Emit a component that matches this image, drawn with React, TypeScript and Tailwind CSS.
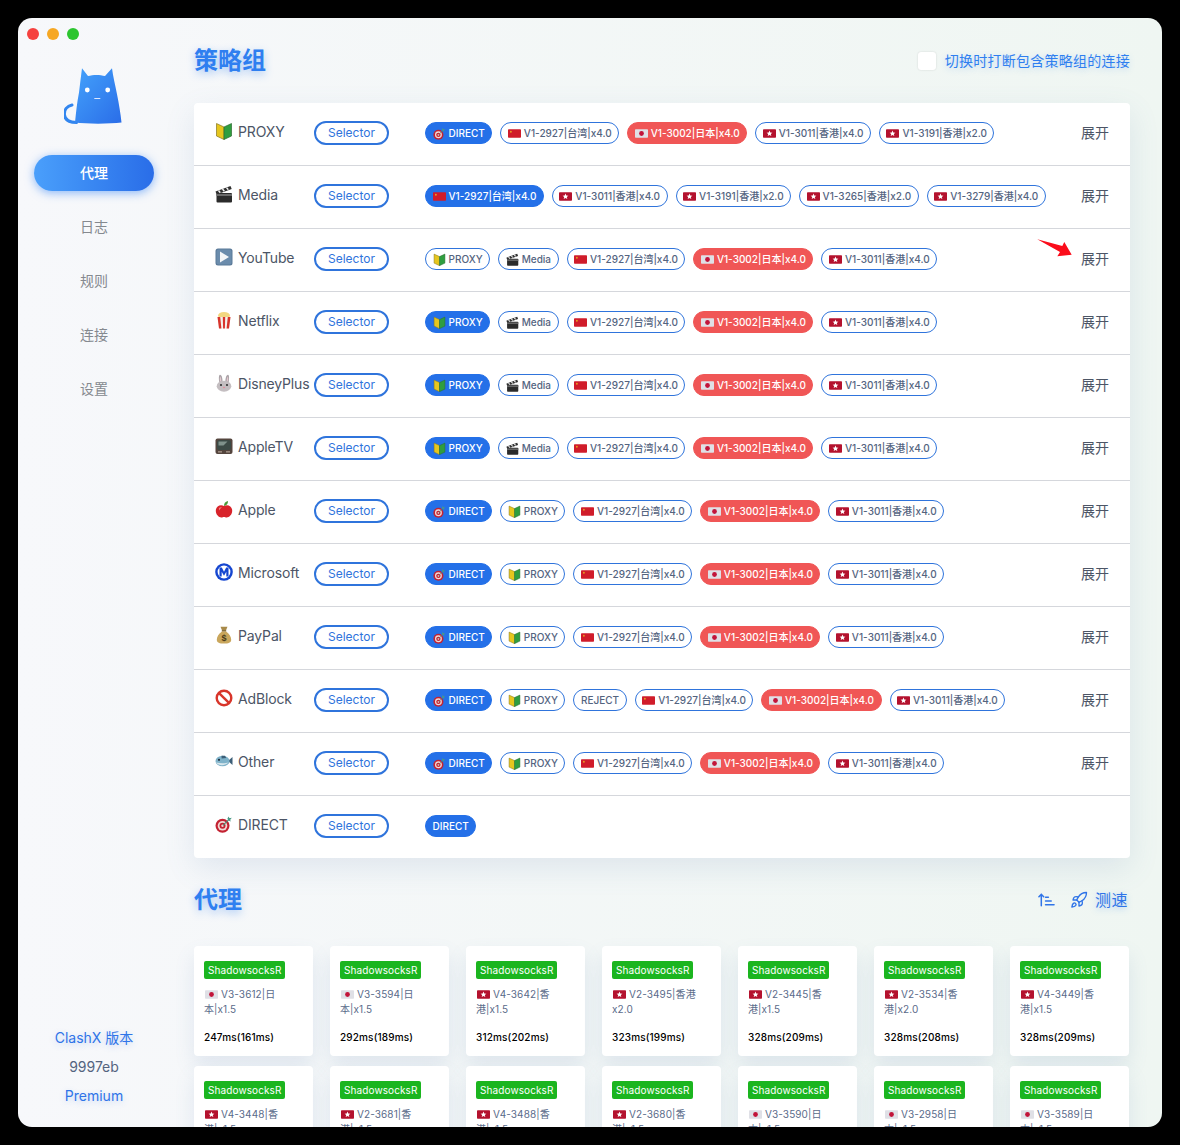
import type { ReactNode } from "react";
import { Rocket } from "lucide-react";

const ui = "font-['Inter','Noto_Sans_CJK_SC',sans-serif]";

type IconName =
    | "shield" | "clapper" | "play" | "popcorn" | "rabbit" | "tv"
    | "apple" | "metro" | "bag" | "noentry" | "fish" | "target"
    | "cn" | "jp" | "hk";

function Icon({ name, className }: { name: IconName; className?: string }) {
    const body: Record<IconName, ReactNode> = {
        shield: (
            <>
                <path d="M1.500 1.500 9 5v12.500L1.500 14Z" fill="#e6c61e" stroke="#857522" strokeWidth=".7" />
                <path d="M16.500 1.500 9 5v12.500l7.500-3.500Z" fill="#2f9e3f" stroke="#2c6b30" strokeWidth=".7" />
            </>
        ),
        clapper: (
            <>
                <rect x="1.500" y="8" width="15.500" height="9.500" rx="1" fill="#2b2b2b" />
                <path d="M.5 6.500 15.500 1l1.200 3L1.700 9.500Z" fill="#2f2f2f" />
                <path d="m3.500 5.500 1.800 2.200M7.500 4 9.300 6.200M11.500 2.600l1.800 2.200" stroke="#eee" strokeWidth="1.500" />
                <rect x="1.500" y="9" width="15.500" height="2" fill="#6a6a6a" />
            </>
        ),
        play: (
            <>
                <rect x="0.500" y="0.500" width="17" height="17" rx="2.500" fill="#5b7a99" />
                <rect x="1.500" y="1.500" width="15" height="15" rx="2" fill="#6b8cac" />
                <path d="M5 3.500v11l9-5.500Z" fill="#f4f6f8" />
            </>
        ),
        popcorn: (
            <>
                <ellipse cx="9" cy="4.500" rx="6" ry="3.500" fill="#f2d781" />
                <path d="M2.500 6h13L14 17.500H4Z" fill="#f4f1ec" />
                <path d="M2.500 6h2.700l1.200 11.500H4ZM7.800 6h2.400l-.300 11.500H8.100ZM12.800 6h2.700L14 17.500h-2.400Z" fill="#d8342c" />
            </>
        ),
        rabbit: (
            <>
                <path d="M5 .8c1.800 0 2.600 3.700 2.600 7.200H4.300C3.700 5 3.700.8 5 .8ZM13 .8c1.300 0 1.300 4.200.700 7.200H10.400c0-3.500.800-7.200 2.600-7.200Z" fill="#aaa3a7" />
                <path d="M5.300 2.500c.7 1 1 3 1 5H5c-.300-2-.300-4 .300-5ZM12.700 2.500c.600 1 .600 3 .300 5h-1.300c0-2 .300-4 1-5Z" fill="#e4c8cf" />
                <ellipse cx="9" cy="12.200" rx="7.300" ry="5.500" fill="#c4bec1" />
                <circle cx="6" cy="11" r="1.100" fill="#333" />
                <circle cx="12" cy="11" r="1.100" fill="#333" />
                <ellipse cx="9" cy="13.500" rx="1.200" ry=".800" fill="#e48f9f" />
            </>
        ),
        tv: (
            <>
                <rect x="0.500" y="1.500" width="17" height="15.500" rx="2" fill="#54453e" />
                <rect x="2" y="3" width="14" height="10" rx="2.500" fill="#3c4a46" />
                <path d="M3.500 4.500h9l-4 4H3.500Z" fill="#7f918b" />
                <rect x="3" y="14.200" width="4" height="1.300" fill="#a8988c" />
                <rect x="11" y="14.200" width="4" height="1.300" fill="#a8988c" />
            </>
        ),
        apple: (
            <>
                <path d="M9 6C6 4 .8 5.500.8 10.800.8 14.800 4 17.500 6.300 17.500c1.200 0 1.700-.500 2.700-.500s1.500.500 2.700.500c2.300 0 5.500-2.700 5.500-6.700C17.200 5.500 12 4 9 6Z" fill="#d8232a" />
                <path d="M4 8c1-1 2.500-1 3-.500-1 .300-2 1.500-2.500 3-.500-.800-.700-1.800-.500-2.500Z" fill="#f08080" />
                <path d="M9 6c0-2.500 1-4.300 4-5 0 2.500-1 4.300-4 5Z" fill="#4a9a36" />
            </>
        ),
        metro: (
            <>
                <circle cx="9" cy="9" r="8.800" fill="#1546d0" />
                <circle cx="9" cy="9" r="6.400" fill="#fff" />
                <path d="M4.500 13.500V4.500h2.300L9 8.800l2.200-4.300h2.300v9h-2.200V8.800L9 12.800 6.700 8.800v4.700Z" fill="#1546d0" />
            </>
        ),
        bag: (
            <>
                <path d="M5.500 .8h7l-1.700 4H7.200Z" fill="#a88a4a" />
                <rect x="6.800" y="4.300" width="4.400" height="1.300" fill="#6f5a2c" />
                <path d="M7 5.500h4c3.200 2 5.200 5.500 5.200 8.200 0 3.200-3 3.800-7.200 3.800s-7.200-.600-7.200-3.800C1.800 11 3.800 7.500 7 5.500Z" fill="#c9a65c" />
                <text x="9" y="15" textAnchor="middle" fontSize="9" fontWeight="700" fill="#4a3a18" fontFamily="Liberation Sans">$</text>
            </>
        ),
        noentry: (
            <>
                <circle cx="9" cy="9" r="7.300" fill="#fff" stroke="#d8352a" strokeWidth="2.400" />
                <path d="m3.800 3.800 10.400 10.400" stroke="#d8352a" strokeWidth="2.400" />
            </>
        ),
        fish: (
            <>
                <path d="M13 9l4.500-4v8Z" fill="#3c5f78" />
                <ellipse cx="7.500" cy="9" rx="7" ry="5.300" fill="#7fb2c9" />
                <path d="M1 10.500c3 3.300 8 3.800 12.500 0-3 1-8.500 1-12.500 0Z" fill="#d7e6ec" />
                <circle cx="4" cy="7.800" r="1.100" fill="#1f2d3a" />
                <path d="M6.500 3.800h3.500l1.200 2.200-4.500.500Z" fill="#3c5f78" />
            </>
        ),
        target: (
            <>
                <circle cx="7.500" cy="10.800" r="7" fill="#c32232" />
                <circle cx="7.500" cy="10.800" r="4.800" fill="#f0d8d4" />
                <circle cx="7.500" cy="10.800" r="3" fill="#c32232" />
                <circle cx="7.500" cy="10.800" r="1.200" fill="#f0d8d4" />
                <path d="m8 10.300 7-7" stroke="#4a8a78" strokeWidth="1.100" />
                <path d="m13.500 1.500 1 1.800 2.300-.500-1.700 2.200 1 1.500-2.700-1-1-1.800Z" fill="#4a9a86" />
            </>
        ),
        cn: (
            <>
                <rect x="0" y="3" width="18" height="12" rx="1" fill="#d01c2a" />
                <circle cx="4" cy="6.500" r="1.300" fill="#e8a020" />
            </>
        ),
        jp: (
            <>
                <rect x="0" y="3" width="18" height="12" rx="1" fill="#dfe0e6" />
                <circle cx="9" cy="9" r="3.300" fill="#c2143a" />
            </>
        ),
        hk: (
            <>
                <rect x="0" y="3" width="18" height="12" rx="1" fill="#b4122e" />
                <path d="m9 5 1.100 2.700 2.900.2-2.200 1.900.7 2.800L9 11.100l-2.500 1.500.7-2.800L5 7.900l2.900-.2Z" fill="#fff" />
            </>
        ),
    };
    return (
        <svg viewBox="0 0 18 18" className={className}>
            {body[name]}
        </svg>
    );
}

const direct = { icon: "target" as IconName, label: "DIRECT" };
const proxy = { icon: "shield" as IconName, label: "PROXY" };
const media = { icon: "clapper" as IconName, label: "Media" };
const tw2927 = { icon: "cn" as IconName, label: "V1-2927|台湾|x4.0" };
const jp3002 = { icon: "jp" as IconName, label: "V1-3002|日本|x4.0", red: true };
const hk3011 = { icon: "hk" as IconName, label: "V1-3011|香港|x4.0" };
const hk3191 = { icon: "hk" as IconName, label: "V1-3191|香港|x2.0" };
const hk3265 = { icon: "hk" as IconName, label: "V1-3265|香港|x2.0" };
const hk3279 = { icon: "hk" as IconName, label: "V1-3279|香港|x4.0" };
const reject = { label: "REJECT" };

type Tag = { icon?: IconName; label: string; red?: boolean };
type Group = { name: string; icon: IconName; tags: Tag[]; selected: string; hideExpand?: boolean };

const groups: Group[] = [
    { name: "PROXY", icon: "shield", tags: [direct, tw2927, jp3002, hk3011, hk3191], selected: "DIRECT" },
    { name: "Media", icon: "clapper", tags: [tw2927, hk3011, hk3191, hk3265, hk3279], selected: "V1-2927|台湾|x4.0" },
    { name: "YouTube", icon: "play", tags: [proxy, media, tw2927, jp3002, hk3011], selected: "" },
    { name: "Netflix", icon: "popcorn", tags: [proxy, media, tw2927, jp3002, hk3011], selected: "PROXY" },
    { name: "DisneyPlus", icon: "rabbit", tags: [proxy, media, tw2927, jp3002, hk3011], selected: "PROXY" },
    { name: "AppleTV", icon: "tv", tags: [proxy, media, tw2927, jp3002, hk3011], selected: "PROXY" },
    { name: "Apple", icon: "apple", tags: [direct, proxy, tw2927, jp3002, hk3011], selected: "DIRECT" },
    { name: "Microsoft", icon: "metro", tags: [direct, proxy, tw2927, jp3002, hk3011], selected: "DIRECT" },
    { name: "PayPal", icon: "bag", tags: [direct, proxy, tw2927, jp3002, hk3011], selected: "DIRECT" },
    { name: "AdBlock", icon: "noentry", tags: [direct, proxy, reject, tw2927, jp3002, hk3011], selected: "DIRECT" },
    { name: "Other", icon: "fish", tags: [direct, proxy, tw2927, jp3002, hk3011], selected: "DIRECT" },
    { name: "DIRECT", icon: "target", tags: [{ label: "DIRECT" }], selected: "DIRECT", hideExpand: true },
];

const proxies: { flag: IconName; name: string; delay: string }[] = [
    { flag: "jp", name: "V3-3612|日本|x1.5", delay: "247ms(161ms)" },
    { flag: "jp", name: "V3-3594|日本|x1.5", delay: "292ms(189ms)" },
    { flag: "hk", name: "V4-3642|香港|x1.5", delay: "312ms(202ms)" },
    { flag: "hk", name: "V2-3495|香港x2.0", delay: "323ms(199ms)" },
    { flag: "hk", name: "V2-3445|香港|x1.5", delay: "328ms(209ms)" },
    { flag: "hk", name: "V2-3534|香港|x2.0", delay: "328ms(208ms)" },
    { flag: "hk", name: "V4-3449|香港|x1.5", delay: "328ms(209ms)" },
    { flag: "hk", name: "V4-3448|香港|x1.5", delay: "" },
    { flag: "hk", name: "V2-3681|香港|x1.5", delay: "" },
    { flag: "hk", name: "V4-3488|香港|x1.5", delay: "" },
    { flag: "hk", name: "V2-3680|香港|x1.5", delay: "" },
    { flag: "jp", name: "V3-3590|日本|x1.5", delay: "" },
    { flag: "jp", name: "V3-2958|日本|x1.5", delay: "" },
    { flag: "jp", name: "V3-3589|日本|x1.5", delay: "" },
];

function Chip({ tag, selected }: { tag: Tag; selected: boolean }) {
    const tone = tag.red
        ? "bg-[#f05656] border-[#f05656] text-white"
        : selected
          ? "bg-[#2470e8] border-[#2470e8] text-white"
          : "bg-white border-[#2f74dc] text-[#54647f]";
    return (
        <span className={`flex h-[22px] items-center gap-[3px] whitespace-nowrap rounded-full border px-[6.5px] text-[10px] font-medium ${tone}`}>
            {tag.icon && <Icon name={tag.icon} className="h-[13px] w-[13px] shrink-0" />}
            {tag.label}
        </span>
    );
}

function GroupRow({ group }: { group: Group }) {
    return (
        <div className="flex h-[63px] items-center border-b border-[#d5d7dc] pb-[2px] pl-[21px] pr-[21px] last:h-[62px] last:border-b-0">
            <Icon name={group.icon} className="mb-[4px] h-[18px] w-[18px] shrink-0" />
            <span className="mb-[4px] ml-[5px] w-[76px] shrink-0 whitespace-nowrap text-[14px] tracking-[-0.15px] text-[#4c5566]">{group.name}</span>
            <span className="flex h-[24px] w-[75px] shrink-0 items-center justify-center rounded-full border-2 border-[#2f74dc] text-[12px] text-[#2f74dc]">
                Selector
            </span>
            <div className="ml-[36px] flex min-w-0 flex-1 items-center gap-[8px]">
                {group.tags.map((tag) => (
                    <Chip key={tag.label} tag={tag} selected={tag.label === group.selected} />
                ))}
            </div>
            {!group.hideExpand && <span className="mb-[2px] text-[14px] text-[#4c5566]">展开</span>}
        </div>
    );
}

function ProxyCard({ flag, name, delay }: { flag: IconName; name: string; delay: string }) {
    return (
        <div className="h-[110px] rounded-[4px] bg-white px-[10px] pt-[15px] shadow-[0_10px_20px_rgba(90,130,180,0.14)]">
            <span className="block h-[18px] w-fit rounded-[2px] bg-[#1bb51f] px-[4px] text-[10px] leading-[18px] tracking-[0.1px] text-white">
                ShadowsocksR
            </span>
            <div className="mt-[8px] h-[30px] text-[10px] leading-[15px] tracking-[0.1px] text-[#5a6b8a]">
                <Icon name={flag} className="ml-[1px] mr-[3px] inline-block h-[13px] w-[13px] align-[-3px]" />
                {name}
            </div>
            <div className="mt-[13px] text-[10px] font-medium leading-[15px] tracking-[0.15px] text-black">{delay}</div>
        </div>
    );
}

function CatLogo() {
    return (
        <svg viewBox="0 0 58 56" className="mr-[2px] h-[56px] w-[58px]">
            <defs>
                <linearGradient id="cat" x1="0" y1="0" x2="1" y2="1">
                    <stop offset="0" stopColor="#44a2fb" />
                    <stop offset="1" stopColor="#2a6de8" />
                </linearGradient>
            </defs>
            <path d="M8 37C3 38 0 42 .5 47c.5 5 5 7.500 12 7.500" fill="none" stroke="#3286ef" strokeWidth="3" strokeLinecap="round" />
            <path d="M18 .3l6 7.700c5-1.500 12-1.500 17 0l7-7.700c1 8 3 16 5 26 2 10 3.500 19 4.500 28.200-12 1.500-35 1.500-46.500 0 1-10 2-20 4-30C16 16 17 8 18 .3Z" fill="url(#cat)" />
            <circle cx="23.300" cy="22" r="2.400" fill="#fff" />
            <circle cx="43.700" cy="22" r="2.400" fill="#fff" />
            <rect x="30.300" y="30" width="6" height="1" fill="#dbe8ff" />
        </svg>
    );
}

export default function App() {
    return (
        <div className={`h-[1145px] w-[1180px] bg-black p-[18px] ${ui}`}>
            <div className="relative flex h-[1109px] w-[1144px] overflow-hidden rounded-[14px] bg-gradient-to-r from-[#f7f8fb] to-[#eff6f2]">
                {/* traffic lights */}
                <div className="absolute left-[9px] top-[10px] flex gap-[8px]">
                    <span className="h-[12px] w-[12px] rounded-full bg-[#f5413f]" />
                    <span className="h-[12px] w-[12px] rounded-full bg-[#f6a723]" />
                    <span className="h-[12px] w-[12px] rounded-full bg-[#2cc52f]" />
                </div>

                <aside className="flex w-[152px] shrink-0 flex-col items-center pt-[50px]">
                    <CatLogo />
                    <nav className="mt-[31px] flex w-[120px] flex-col gap-[18px] text-center text-[14px] text-[#85898f]">
                        <span className="h-[36px] rounded-full bg-gradient-to-r from-[#4a9ffb] to-[#2a6de8] font-medium leading-[36px] text-white shadow-[0_2px_10px_rgba(50,130,245,0.55)]">
                            代理
                        </span>
                        <span className="h-[36px] leading-[36px]">日志</span>
                        <span className="h-[36px] leading-[36px]">规则</span>
                        <span className="h-[36px] leading-[36px]">连接</span>
                        <span className="h-[36px] leading-[36px]">设置</span>
                    </nav>
                    <div className="mb-[21px] mt-auto flex flex-col items-center gap-[9px] text-[14px] leading-[20px]">
                        <span className="text-[#2f74e8] [text-shadow:0_2px_6px_rgba(47,116,232,0.25)]">ClashX 版本</span>
                        <span className="text-[#54647f]">9997eb</span>
                        <span className="text-[#2f74e8] [text-shadow:0_2px_6px_rgba(47,116,232,0.25)]">Premium</span>
                    </div>
                </aside>

                <main className="relative flex min-w-0 flex-1 flex-col pl-[24px] pr-[32px]">
                    <div className="flex h-[85px] shrink-0 items-center justify-between">
                        <h1 className="text-[24px] font-bold text-[#2f7ff0] [text-shadow:0_3px_8px_rgba(47,127,240,0.4)]">策略组</h1>
                        <label className="flex items-center gap-[9px] text-[14px] tracking-[0.25px] text-[#2f7ff0] [text-shadow:0_2px_6px_rgba(47,127,240,0.25)]">
                            <span className="h-[18px] w-[18px] rounded-[3px] bg-white shadow-[0_0_2px_rgba(0,0,0,0.15)]" />
                            切换时打断包含策略组的连接
                        </label>
                    </div>

                    <section className="shrink-0 rounded-[4px] bg-white shadow-[0_10px_30px_rgba(90,130,180,0.14)]">
                        {groups.map((group) => (
                            <GroupRow key={group.name} group={group} />
                        ))}
                    </section>

                    <div className="mt-[20px] flex h-[44px] shrink-0 items-center justify-between">
                        <h2 className="text-[24px] font-bold text-[#2f7ff0] [text-shadow:0_3px_8px_rgba(47,127,240,0.4)]">代理</h2>
                        <div className="mr-[2px] flex items-center gap-[15px] text-[#2f74e8]">
                            <svg viewBox="0 0 18 16" className="h-[16px] w-[17px]" fill="none" stroke="currentColor" strokeWidth="1.600" strokeLinecap="round">
                                <path d="M3.500 14V2M1 4.500 3.500 2 6 4.500M8 5h3M8 9h6M8 13h9" />
                            </svg>
                            <div className="flex items-center gap-[7px]">
                                <Rocket size={18} strokeWidth={1.8} />
                                <span className="text-[16px] tracking-[0.5px] [text-shadow:0_2px_6px_rgba(47,127,240,0.35)]">测速</span>
                            </div>
                        </div>
                    </div>

                    <div className="mt-[24px] grid shrink-0 grid-cols-[repeat(7,119px)] gap-x-[17px] gap-y-[10px]">
                        {proxies.map((item) => (
                            <ProxyCard key={item.name} {...item} />
                        ))}
                    </div>
                </main>

                {/* red annotation arrow */}
                <svg viewBox="0 0 36 20" className="absolute left-[1019px] top-[220px] h-[20px] w-[36px]">
                    <path d="M.3 1.300 25.300 8l2-4 7.400 12.700-14.400 1.600L23 14Z" fill="#fb0d1b" />
                </svg>
            </div>
        </div>
    );
}
